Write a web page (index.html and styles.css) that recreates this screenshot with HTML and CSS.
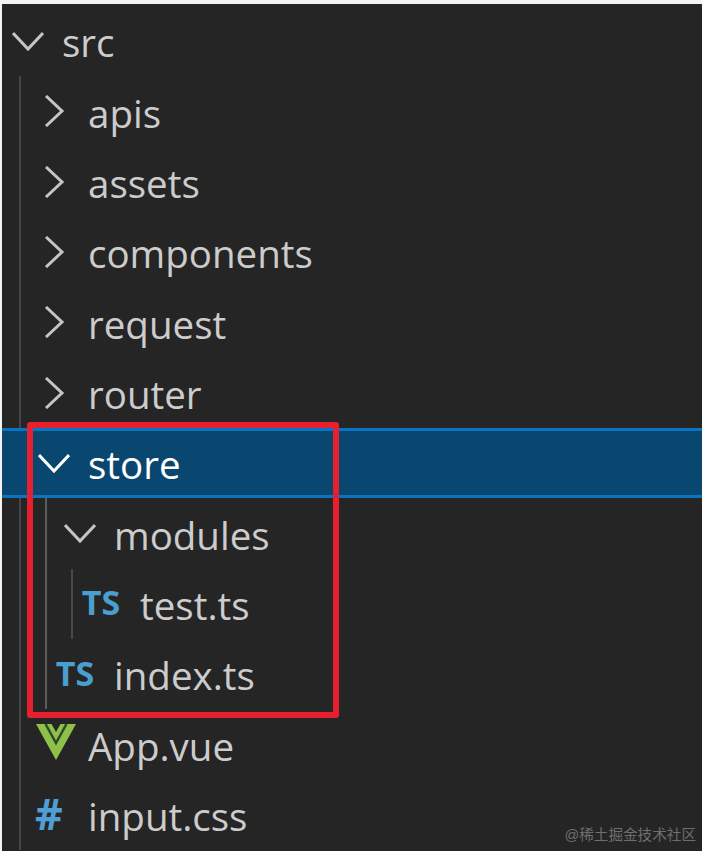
FILE: index.html
```html
<!DOCTYPE html>
<html lang="en">
<head>
  <meta charset="UTF-8" />
  <meta name="viewport" content="width=device-width, initial-scale=1.0" />
  <title>Explorer</title>
  <link rel="stylesheet" href="styles.css">
</head>
<body>

<div class="explorer">
  <div class="row">
    <svg class="chevron" viewBox="0 0 32 32"><path d="M1 8 L16 24 L31 8" /></svg>
    <span class="name">src</span>
  </div>

  <div class="children">
    <div class="row">
      <svg class="chevron" viewBox="0 0 32 32"><path d="M8 1 L24 16 L8 31" /></svg>
      <span class="name">apis</span>
    </div>
    <div class="row">
      <svg class="chevron" viewBox="0 0 32 32"><path d="M8 1 L24 16 L8 31" /></svg>
      <span class="name">assets</span>
    </div>
    <div class="row">
      <svg class="chevron" viewBox="0 0 32 32"><path d="M8 1 L24 16 L8 31" /></svg>
      <span class="name">components</span>
    </div>
    <div class="row">
      <svg class="chevron" viewBox="0 0 32 32"><path d="M8 1 L24 16 L8 31" /></svg>
      <span class="name">request</span>
    </div>
    <div class="row">
      <svg class="chevron" viewBox="0 0 32 32"><path d="M8 1 L24 16 L8 31" /></svg>
      <span class="name">router</span>
    </div>

    <div class="row selected">
      <svg class="chevron" viewBox="0 0 32 32"><path d="M1 8 L16 24 L31 8" /></svg>
      <span class="name">store</span>
    </div>

    <div class="children">
      <div class="row">
        <svg class="chevron" viewBox="0 0 32 32"><path d="M1 8 L16 24 L31 8" /></svg>
        <span class="name">modules</span>
      </div>
      <div class="children">
        <div class="row">
          <span class="file-icon ts">TS</span>
          <span class="name">test.ts</span>
        </div>
      </div>
      <div class="row">
        <span class="file-icon ts">TS</span>
        <span class="name">index.ts</span>
      </div>
    </div>

    <div class="row">
      <svg class="file-icon vue" viewBox="0 0 40 36">
        <polygon class="vue-green" points="0,0 40,0 20,36" />
        <path class="vue-groove" d="M9.5 0 L20 19 L30.5 0" />
        <polygon class="vue-dark" points="15.5,0 24.5,0 20,8" />
      </svg>
      <span class="name">App.vue</span>
    </div>
    <div class="row">
      <span class="file-icon css">#</span>
      <span class="name">input.css</span>
    </div>
  </div>
</div>

<!-- annotation drawn on top of the tree -->
<div class="highlight"></div>
<div class="watermark">@稀土掘金技术社区</div>

</body>
</html>
```

FILE: styles.css
```css
html, body {
  margin: 0;
  height: 100%;
}

body {
  background: #f4f4f4;
  padding: 4px 0 0 2px;
  box-sizing: border-box;
  overflow: hidden;
  font-family: 'Open Sans', 'Noto Sans', sans-serif;
}

.explorer {
  background: #252526;
  height: 100%;
  padding-top: 2px;
  box-sizing: border-box;
  overflow: hidden;
  color: #cccccc;
}

.row {
  display: flex;
  align-items: center;
  height: 70.33px;
  padding-left: 10px;
  box-sizing: border-box;
}

.name {
  font-size: 38.5px;
  line-height: 1;
  margin-left: 18px;
  margin-top: 3px;
}

.chevron {
  width: 32px;
  height: 32px;
  flex: none;
}

.chevron path {
  fill: none;
  stroke: #c5c5c5;
  stroke-width: 3;
}

.children {
  margin-left: 17px;
  border-left: 2px solid #444444;
  padding-left: 7px;
}

.children .children {
  border-left-color: #5c5c5c;
}

.children .children .children {
  border-left-color: #484848;
}

.row.selected {
  margin-left: -26px;
  padding-left: 36px;
  background: #094771;
  border-top: 3px solid #0a74c4;
  border-bottom: 3px solid #0a74c4;
  color: #fff;
}

.row.selected .chevron path {
  stroke: #fff;
}

.file-icon {
  flex: none;
  font-weight: 700;
}

.ts {
  width: 40px;
  margin-left: -9px;
  margin-right: 1px;
  margin-top: -3px;
  font-size: 34px;
  line-height: 1;
  text-align: center;
  color: #4a9fd0;
}

.vue {
  width: 40px;
  height: 36px;
  margin-left: -2px;
  margin-right: -6px;
  margin-top: -4px;
}

.vue-green {
  fill: #8dc149;
}

.vue-groove {
  fill: none;
  stroke: #2f4a2a;
  stroke-width: 2.5;
}

.vue-dark {
  fill: #252526;
}

.css {
  width: 32px;
  font-size: 43px;
  line-height: 1;
  color: #4f9fd4;
  margin-left: -5px;
  margin-right: 5px;
  margin-top: -3px;
  text-align: center;
}

.highlight {
  position: absolute;
  left: 27px;
  top: 422px;
  width: 312px;
  height: 296px;
  box-sizing: border-box;
  border: 6px solid #e6202e;
  border-radius: 3px;
}

.watermark {
  position: absolute;
  right: 6px;
  bottom: 7px;
  font-family: 'Liberation Sans', 'Noto Sans CJK SC', sans-serif;
  font-size: 14.6px;
  color: #6e6e6e;
}
```
